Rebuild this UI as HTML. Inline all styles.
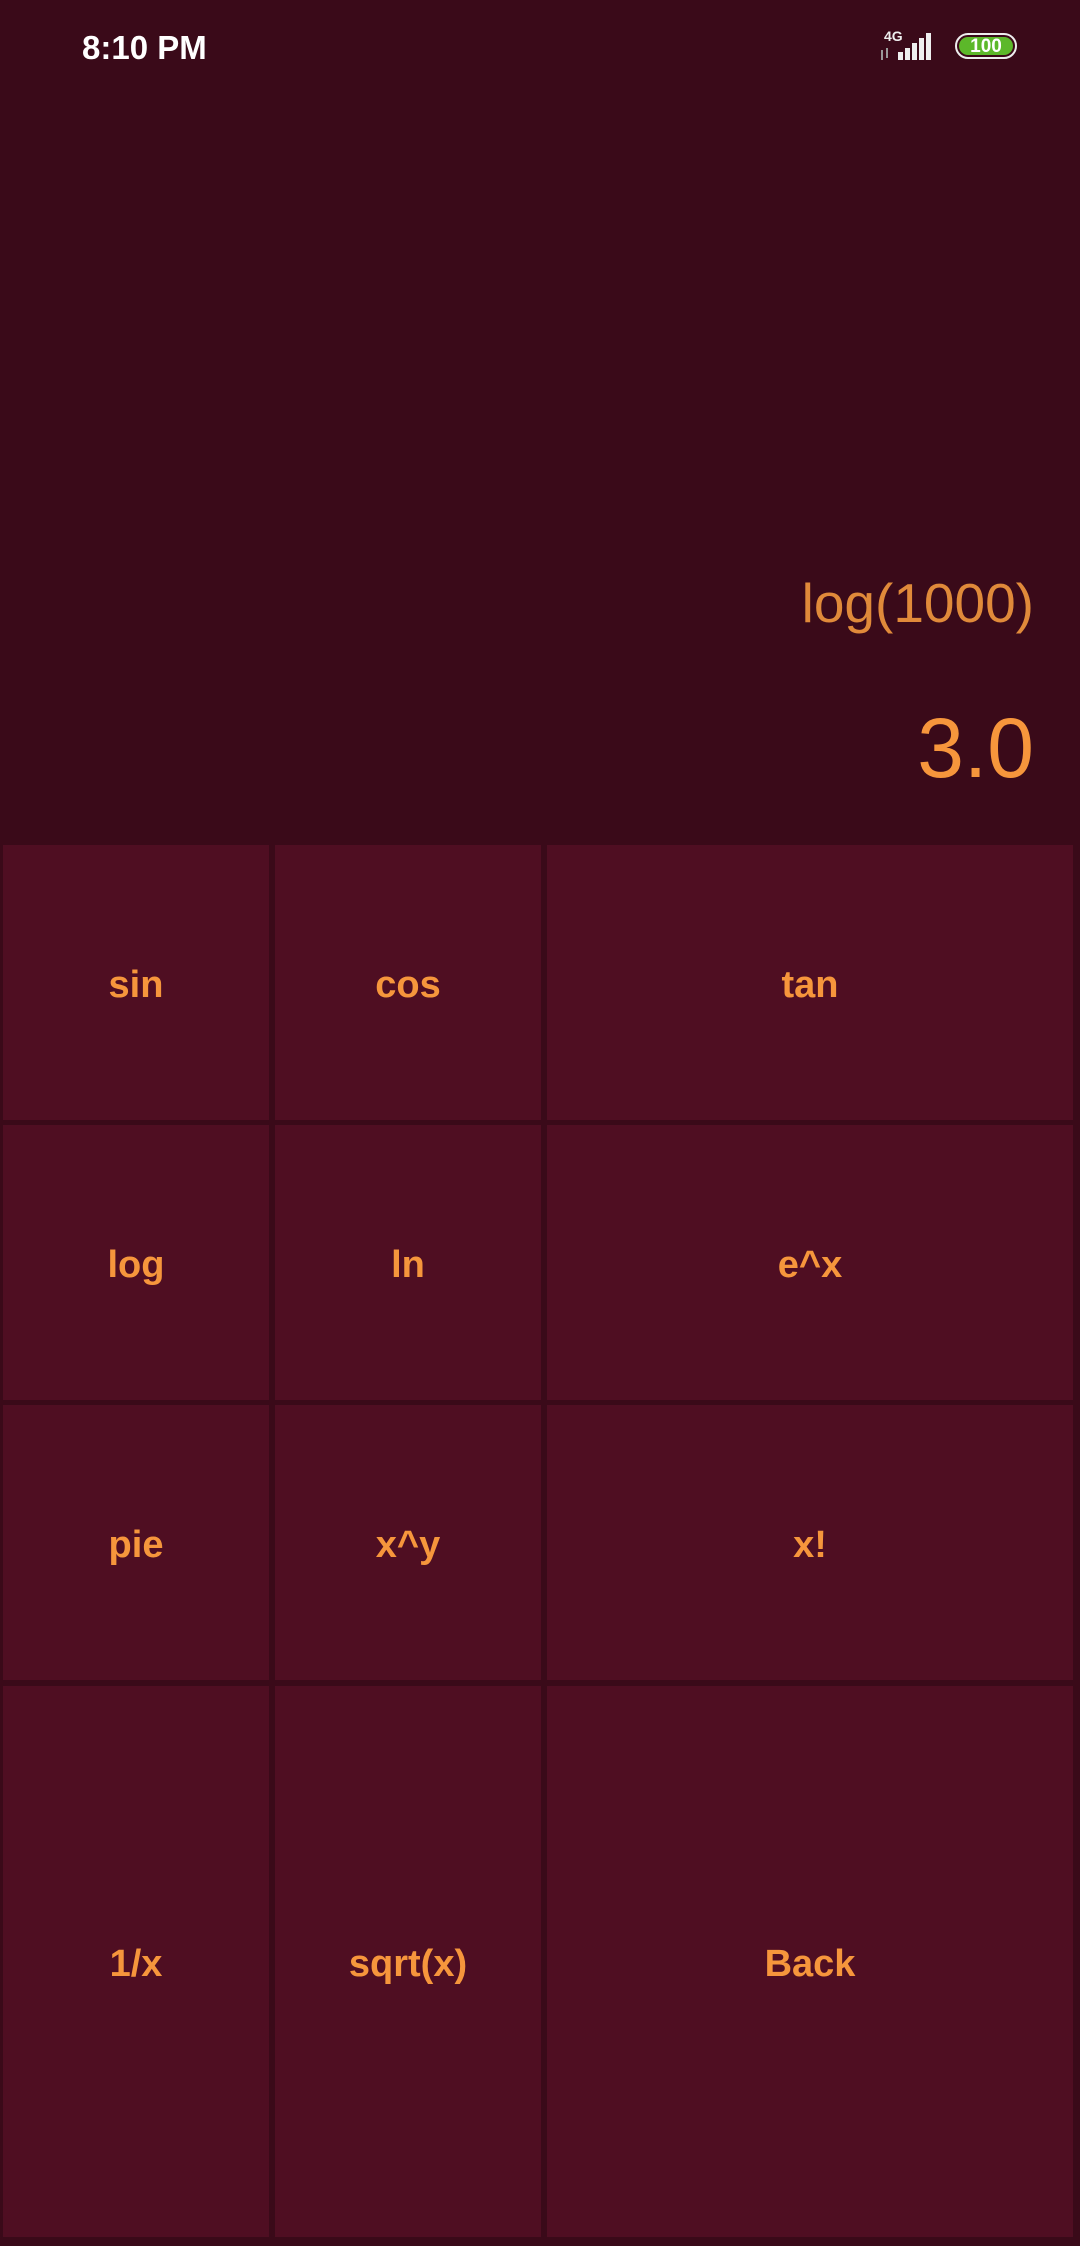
<!DOCTYPE html>
<html><head><style>
body{margin:0;width:1080px;height:2246px;background:#3a0a19;font-family:"Liberation Sans",sans-serif;position:relative;overflow:hidden}
.t{position:absolute;color:#fff;font-weight:bold;font-size:33px;left:82px;top:29px}
.c{position:absolute;background:#4f0e22;color:#f6963c;font-size:38px;font-weight:bold;display:flex;align-items:center;justify-content:center;box-sizing:border-box;padding-top:5px}
.d{position:absolute;right:46px;color:#e08a3a;white-space:nowrap}
</style></head><body>
<div class="t">8:10 PM</div>
<div style="position:absolute;left:884px;top:28px;color:#eee;font-size:14px;font-weight:bold">4G</div>
<svg style="position:absolute;left:878px;top:30px" width="60" height="32">
<rect x="20" y="22" width="5" height="8" fill="#eee"/><rect x="27" y="18" width="5" height="12" fill="#eee"/><rect x="34" y="13" width="5" height="17" fill="#eee"/><rect x="41" y="8" width="5" height="22" fill="#eee"/><rect x="48" y="3" width="5" height="27" fill="#eee"/>
<path d="M4 20v10M9 18v10" stroke="#999" stroke-width="2"/></svg>
<div style="position:absolute;left:955px;top:33px;width:62px;height:26px;border:2px solid #eee;border-radius:14px;box-sizing:border-box;padding:2px">
<div style="background:#5cb82a;border-radius:10px;height:100%;color:#fff;font-size:19px;font-weight:bold;text-align:center;line-height:19px">100</div></div>
<div class="d" style="font-size:55px;top:571px">log(1000)</div>
<div class="d" style="font-size:84px;top:700px;color:#f6963c">3.0</div>
<div class="c" style="left:3px;top:845px;width:266px;height:275px">sin</div>
<div class="c" style="left:275px;top:845px;width:266px;height:275px">cos</div>
<div class="c" style="left:547px;top:845px;width:526px;height:275px">tan</div>
<div class="c" style="left:3px;top:1125px;width:266px;height:275px">log</div>
<div class="c" style="left:275px;top:1125px;width:266px;height:275px">ln</div>
<div class="c" style="left:547px;top:1125px;width:526px;height:275px">e^x</div>
<div class="c" style="left:3px;top:1405px;width:266px;height:275px">pie</div>
<div class="c" style="left:275px;top:1405px;width:266px;height:275px">x^y</div>
<div class="c" style="left:547px;top:1405px;width:526px;height:275px">x!</div>
<div class="c" style="left:3px;top:1686px;width:266px;height:551px">1/x</div>
<div class="c" style="left:275px;top:1686px;width:266px;height:551px">sqrt(x)</div>
<div class="c" style="left:547px;top:1686px;width:526px;height:551px">Back</div>
</body></html>
